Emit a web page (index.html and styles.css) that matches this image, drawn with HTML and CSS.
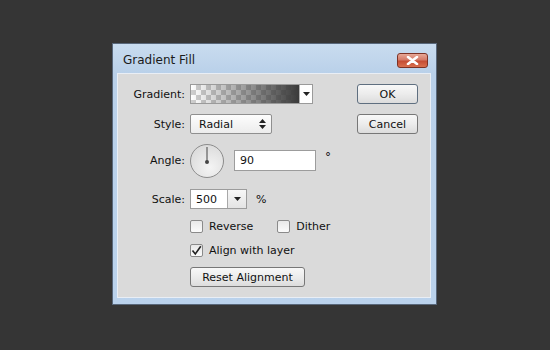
FILE: index.html
```html
<!DOCTYPE html>
<html lang="en">
<head>
    <meta charset="UTF-8">
    <title>Gradient Fill</title>
    <link rel="stylesheet" href="styles.css">
</head>
<body>

<div class="dialog">
    <div class="titlebar">
        <span class="title">Gradient Fill</span>
        <div class="close">
            <svg width="13" height="9" viewBox="0 0 13 9">
                <path d="M2 1 L11 8 M11 1 L2 8" stroke="#fff" stroke-width="2.6" stroke-linecap="round"/>
            </svg>
        </div>
    </div>
    <div class="content">
        <div class="form">
            <div class="row r-gradient">
                <label class="label">Gradient:</label>
                <div class="swatch">
                    <div class="ramp"></div>
                    <div class="drop">
                        <svg width="7" height="4" viewBox="0 0 7 4"><path d="M0 0 H7 L3.5 4 Z" fill="#222"/></svg>
                    </div>
                </div>
            </div>
            <div class="row r-style">
                <label class="label">Style:</label>
                <div class="select">
                    <span>Radial</span>
                    <svg width="7" height="10" viewBox="0 0 7 10"><path d="M3.5 0 L7 4 H0 Z M0 6 H7 L3.5 10 Z" fill="#222"/></svg>
                </div>
            </div>
            <div class="row r-angle">
                <label class="label">Angle:</label>
                <div class="dial">
                    <svg width="34" height="34" viewBox="0 0 34 34">
                        <line x1="17" y1="18" x2="17" y2="3" stroke="#444" stroke-width="1"/>
                        <circle cx="17" cy="18" r="2" fill="#444"/>
                    </svg>
                </div>
                <div class="field angle">90</div>
                <span class="unit deg">°</span>
            </div>
            <div class="row r-scale">
                <label class="label">Scale:</label>
                <div class="combo">
                    <span class="value">500</span>
                    <span class="drop">
                        <svg width="7" height="4" viewBox="0 0 7 4"><path d="M0 0 H7 L3.5 4 Z" fill="#222"/></svg>
                    </span>
                </div>
                <span class="unit">%</span>
            </div>
            <div class="row r-check">
                <span class="check"><span class="box"></span>Reverse</span>
                <span class="check dither"><span class="box"></span>Dither</span>
            </div>
            <div class="row r-check r-align">
                <span class="check"><span class="box">
                    <svg width="11" height="11" viewBox="0 0 11 11"><path d="M1.5 5.5 L4.3 9 L9.8 1.2" fill="none" stroke="#222" stroke-width="1.6"/></svg>
                </span>Align with layer</span>
            </div>
            <div class="row r-reset">
                <button class="btn reset">Reset Alignment</button>
            </div>
        </div>
        <div class="actions">
            <button class="btn ok">OK</button>
            <button class="btn">Cancel</button>
        </div>
    </div>
</div>

</body>
</html>
```

FILE: styles.css
```css
* {
    box-sizing: border-box;
}
body {
    margin: 0;
    background: #353535;
    font-family: "DejaVu Sans", Verdana, sans-serif;
    font-size: 11px;
    color: #111;
}
.dialog {
    width: 325px;
    height: 262px;
    margin: 43px 0 0 112px;
    border: 1px solid #58677a;
    background: linear-gradient(#c9dcef, #b9d0e9 30px, #bad2ec);
    display: flex;
    flex-direction: column;
    box-shadow: 0 1px 0 #1d1d1d;
}
.titlebar {
    height: 29px;
    display: flex;
    align-items: center;
    justify-content: space-between;
    padding: 0 8px 0 10px;
}
.title {
    font-size: 12px;
    color: #1a1a1a;
    margin-top: 3px;
}
.close {
    width: 31px;
    height: 15px;
    margin-top: 4px;
    border: 1px solid #7d3225;
    border-radius: 3px;
    background: linear-gradient(#e7a897, #d47a68 45%, #c54d34 55%, #d9704f);
    display: flex;
    align-items: center;
    justify-content: center;
}
.content {
    flex: 1;
    margin: 0 5px 6px 4px;
    border: 1px solid #e9eef5;
    background: #dadada;
    display: flex;
    padding: 10px 11px 0 0;
}
.form {
    width: 239px;
    display: flex;
    flex-direction: column;
}
.row {
    display: flex;
    align-items: center;
    height: 20px;
}
.label {
    width: 67px;
    text-align: right;
    margin-right: 5px;
}
.r-style { margin-top: 10px; }
.r-angle { margin-top: 9px; height: 35px; }
.r-scale { margin-top: 11px; }
.r-check { margin-top: 10px; height: 14px; padding-left: 72px; }
.r-align { margin-top: 10px; }
.r-reset { margin-top: 10px; padding-left: 72px; }

.swatch {
    width: 123px;
    height: 20px;
    border: 1px solid #9a9a9a;
    display: flex;
    background: #fff;
}
.ramp {
    flex: 1;
    background:
        linear-gradient(to right, rgba(58, 58, 58, 0), rgba(58, 58, 58, 0.35) 35%, rgba(58, 58, 58, 1)),
        repeating-conic-gradient(#cfcfcf 0 25%, #fff 0 50%) 0 0 / 10px 10px;
}
.drop {
    width: 13px;
    border-left: 1px solid #b0b0b0;
    display: flex;
    align-items: center;
    justify-content: center;
}
.select {
    width: 82px;
    height: 20px;
    border: 1px solid #8f8f8f;
    border-radius: 2px;
    background: linear-gradient(#fdfdfd, #ececec);
    display: flex;
    align-items: center;
    justify-content: space-between;
    padding: 0 5px 0 8px;
}
.dial {
    width: 34px;
    height: 34px;
    border: 1px solid #8c8c8c;
    border-radius: 50%;
    background: radial-gradient(circle at 60% 70%, #f4f4f4, #dedede 70%, #d0d0d0);
    position: relative;
    margin-right: 10px;
}
.dial svg {
    position: absolute;
    left: -1px;
    top: -1px;
}
.field {
    height: 21px;
    border: 1px solid #9c9c9c;
    background: #fff;
    display: flex;
    align-items: center;
    padding-left: 5px;
}
.angle { width: 82px; }
.unit { margin-left: 9px; }
.deg { align-self: flex-start; margin-top: 7px; margin-left: 9px; font-size: 12px; }
.combo {
    width: 57px;
    height: 20px;
    border: 1px solid #9c9c9c;
    display: flex;
    background: #fff;
}
.combo .value {
    width: 36px;
    padding-left: 5px;
    display: flex;
    align-items: center;
}
.combo .drop {
    flex: 1;
    width: auto;
    border-left: 1px solid #a8a8a8;
    background: linear-gradient(#f7f7f7, #e4e4e4);
}
.check {
    display: flex;
    align-items: center;
}
.box {
    width: 13px;
    height: 13px;
    border: 1px solid #8a8a8a;
    border-radius: 2px;
    background: linear-gradient(#e8e8e8, #fbfbfb);
    margin-right: 6px;
    display: flex;
    align-items: center;
    justify-content: center;
}
.dither { margin-left: 24px; }
.actions {
    display: flex;
    flex-direction: column;
    gap: 10px;
}
.btn {
    font-family: "DejaVu Sans", Verdana, sans-serif;
    font-size: 11px;
    color: #111;
    width: 61px;
    height: 20px;
    border: 1px solid #777;
    border-radius: 3px;
    background: linear-gradient(#f8f8f8, #ececec 50%, #dcdcdc);
    padding: 0;
}
.ok { border-color: #5f6f80; }
.reset { width: 115px; }
```
